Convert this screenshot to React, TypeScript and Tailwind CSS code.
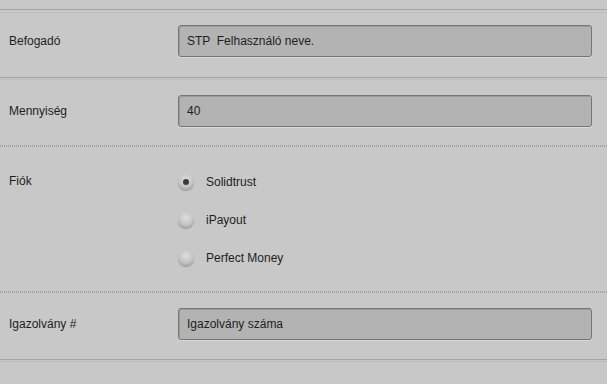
import React from "react";

const font = { fontFamily: '"Liberation Sans", Arial, sans-serif' };

function Input({ value }: { value: string }) {
  return (
    <div className="w-[414px] h-[32px] rounded-[3px] border border-[#767676] bg-[#b3b3b3] shadow-[inset_1px_1px_0_#9c9c9c,0_1px_0_#d8d8d8] flex items-center pl-[8px] text-[12px] text-[#1e1e1e] whitespace-pre">
      {value}
    </div>
  );
}

function Radio({ checked, label }: { checked?: boolean; label: string }) {
  return (
    <div className="flex items-center h-[16px]">
      <div className="w-[16px] h-[16px] rounded-full bg-[radial-gradient(circle_at_50%_35%,#dedede_0%,#c4c4c4_55%,#8a8a8a_100%)] shadow-[0_1px_1px_#9a9a9a] flex items-center justify-center">
        {checked && <div className="w-[6px] h-[6px] rounded-full bg-[#3a3a3a]" />}
      </div>
      <span className="ml-[12px] text-[12px] text-[#1e1e1e]">{label}</span>
    </div>
  );
}

function Label({ children }: { children: React.ReactNode }) {
  return (
    <div className="w-[178px] pl-[9px] h-[32px] flex items-center text-[12px] text-[#1e1e1e]">{children}</div>
  );
}

export default function App() {
  return (
    <div className="w-[607px] h-[384px] bg-[#c8c8c8] overflow-hidden" style={font}>
      <div className="h-[9px]" />
      <div className="h-[1px] bg-[#a6a6a6]" />
      <div className="h-[2px]" />
      <div className="h-[1px] bg-[#bdbdbd]" />
      {/* Row 1 */}
      <div className="h-[64px] flex items-start pt-[12px]">
        <Label>Befogadó</Label>
        <Input value="STP  Felhasználó neve." />
      </div>
      <div className="h-[1px] bg-[#a6a6a6]" />
      <div className="h-[1px]" />
      <div className="h-[1px] bg-[#bdbdbd]" />
      {/* Row 2 */}
      <div className="h-[65px] flex items-start pt-[15px]">
        <Label>Mennyiség</Label>
        <Input value="40" />
      </div>
      <div className="h-[2px] border-t border-b border-dotted border-[#a0a0a0]" />
      {/* Row 3 */}
      <div className="h-[144px] flex">
        <div className="w-[178px] pl-[9px] pt-[25px] text-[12px] text-[#1e1e1e]">Fiók</div>
        <div className="pt-[27px] flex flex-col gap-[22px]">
          <Radio checked label="Solidtrust" />
          <Radio label="iPayout" />
          <Radio label="Perfect Money" />
        </div>
      </div>
      <div className="h-[2px] border-t border-b border-dotted border-[#a0a0a0]" />
      {/* Row 4 */}
      <div className="h-[66px] flex items-start pt-[15px]">
        <Label>Igazolvány #</Label>
        <Input value="Igazolvány száma" />
      </div>
      <div className="h-[1px] bg-[#a6a6a6]" />
      <div className="h-[1px]" />
      <div className="h-[1px] bg-[#bdbdbd]" />
    </div>
  );
}
